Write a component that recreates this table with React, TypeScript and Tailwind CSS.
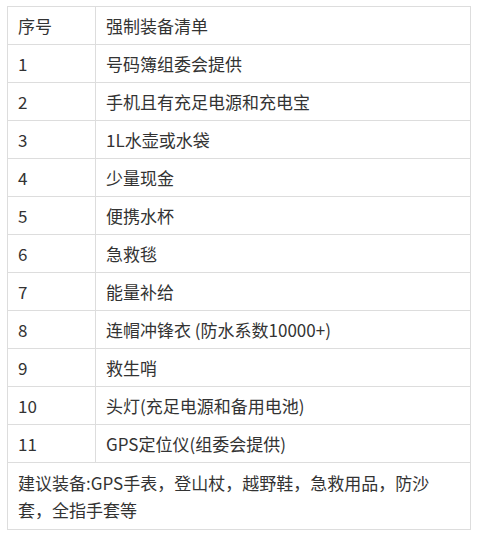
import React from "react";

const rows: [string, string][] = [
  ["1", "号码簿组委会提供"],
  ["2", "手机且有充足电源和充电宝"],
  ["3", "1L水壶或水袋"],
  ["4", "少量现金"],
  ["5", "便携水杯"],
  ["6", "急救毯"],
  ["7", "能量补给"],
  ["8", "连帽冲锋衣 (防水系数10000+)"],
  ["9", "救生哨"],
  ["10", "头灯(充足电源和备用电池)"],
  ["11", "GPS定位仪(组委会提供)"],
];

export default function App() {
  return (
    <div
      className="w-[481px] h-[540px] bg-white pt-[6px] pl-[7px]"
      style={{ fontFamily: '"Microsoft YaHei", "Noto Sans CJK SC", "Noto Sans", sans-serif' }}
    >
      <table className="w-[464px] border-collapse text-[17px] text-[#333333] table-fixed">
        <colgroup>
          <col className="w-[88px]" />
          <col />
        </colgroup>
        <tbody>
          <tr className="h-[38px]">
            <td className="border border-[#dddddd] px-[10px] leading-[20px]">序号</td>
            <td className="border border-[#dddddd] px-[10px] leading-[20px]">强制装备清单</td>
          </tr>
          {rows.map(([n, t]) => (
            <tr key={n} className="h-[38px]">
              <td className="border border-[#dddddd] px-[10px] leading-[20px]">{n}</td>
              <td className="border border-[#dddddd] px-[10px] leading-[20px]">{t}</td>
            </tr>
          ))}
          <tr className="h-[66px]">
            <td colSpan={2} className="border border-[#dddddd] px-[10px] py-[6px] leading-[27px]">
              建议装备:GPS手表，登山杖，越野鞋，急救用品，防沙套，全指手套等
            </td>
          </tr>
        </tbody>
      </table>
    </div>
  );
}
